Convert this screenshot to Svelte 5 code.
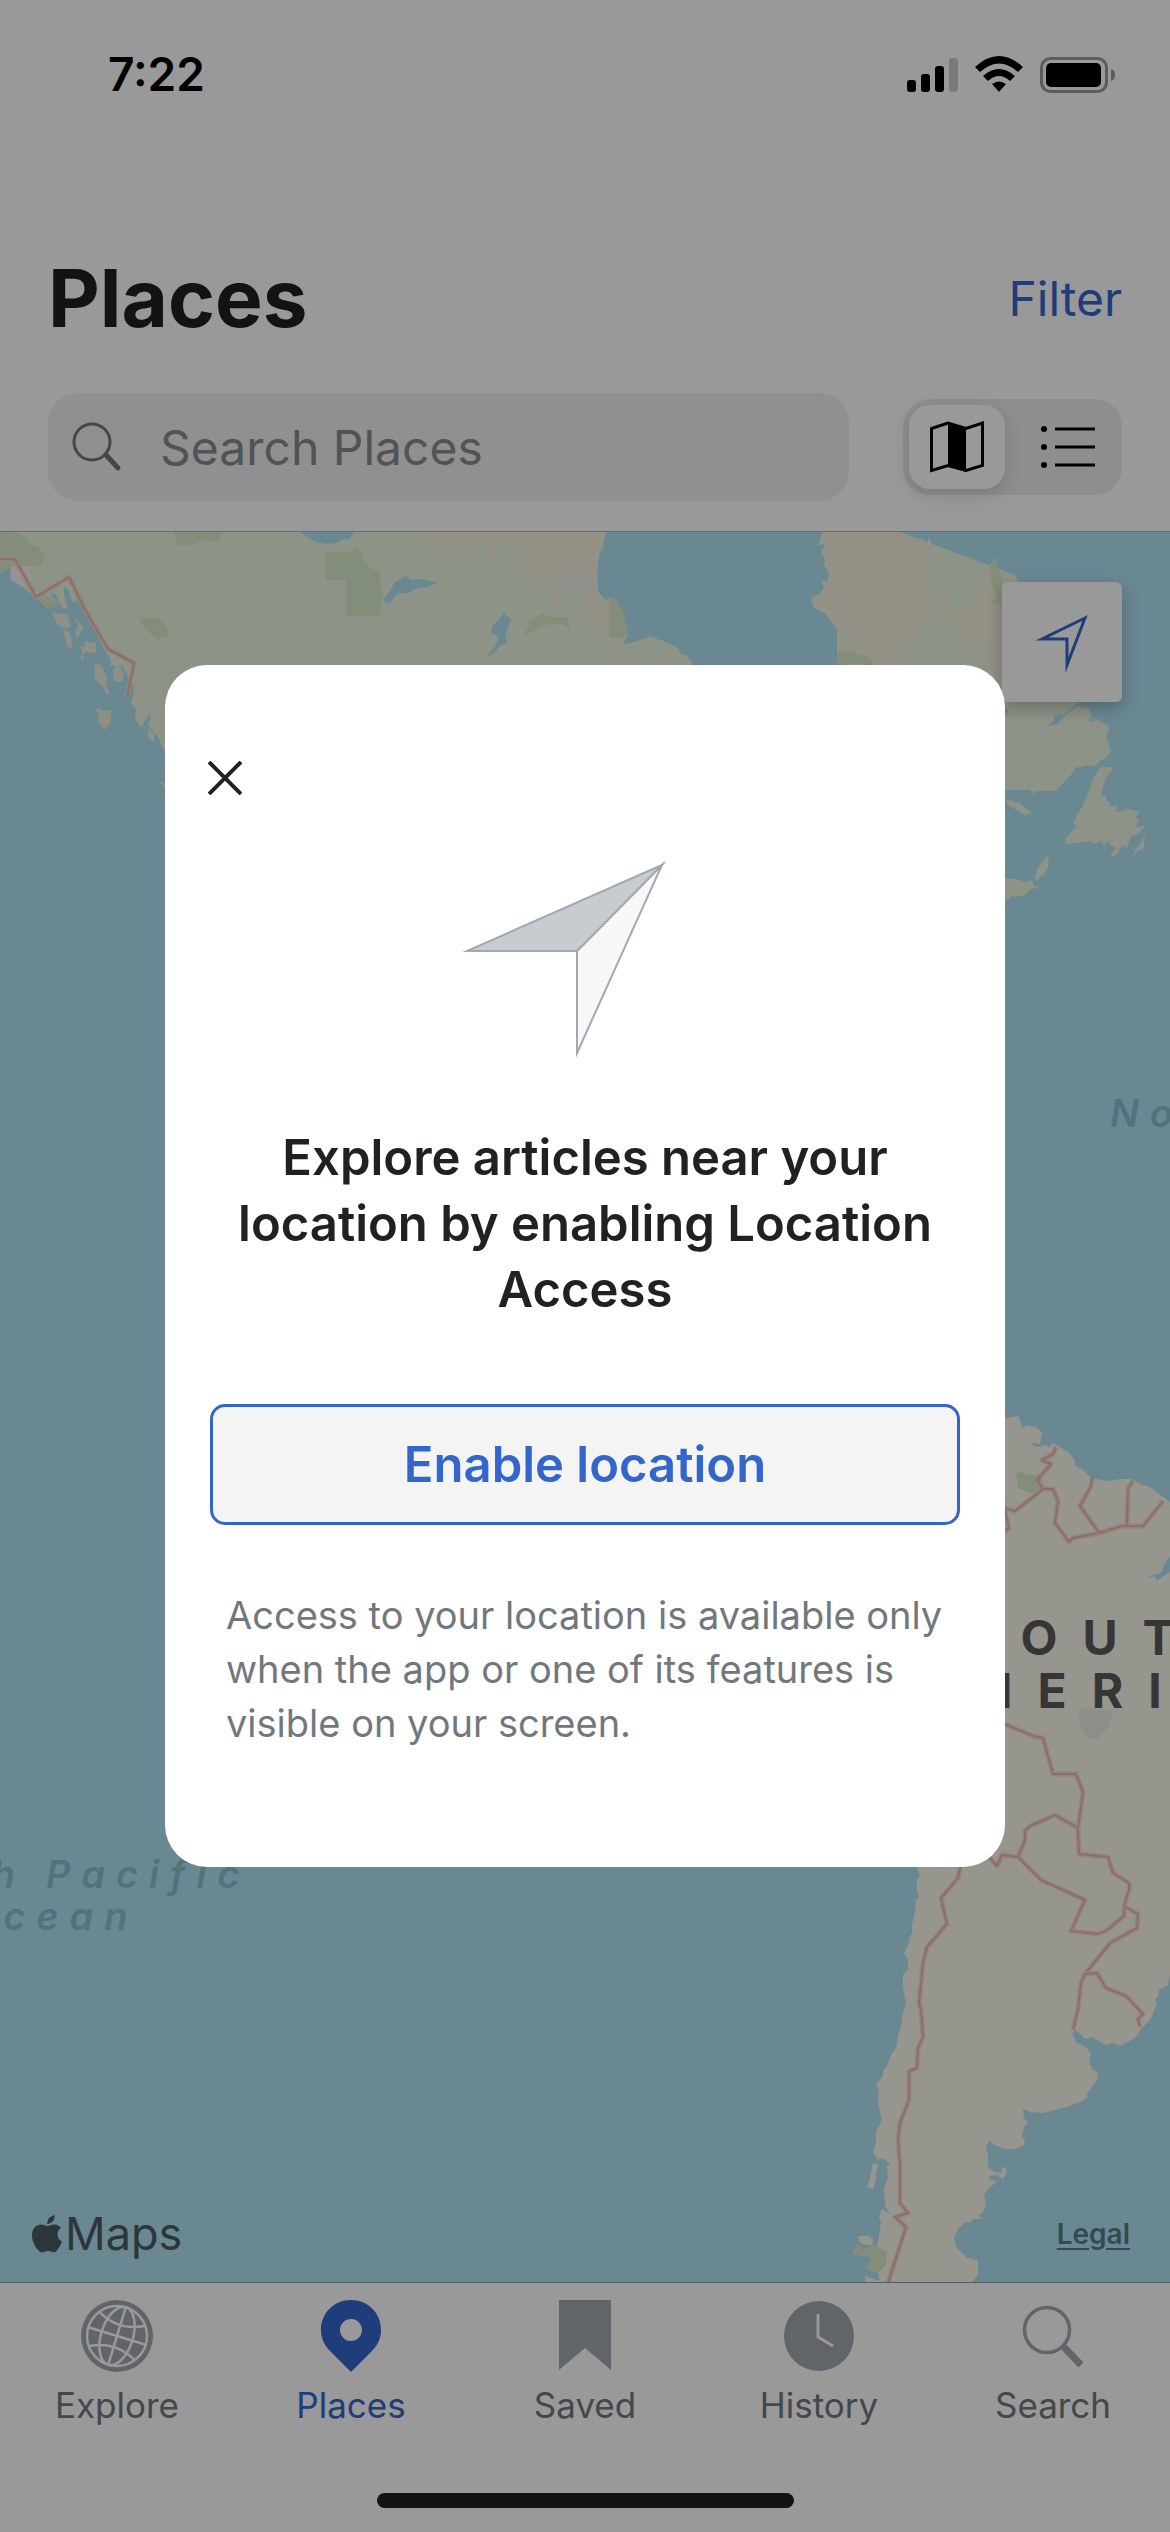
<script>
  let query = $state('');
  let view = $state('map');
  let activeTab = $state('Places');
  let dialogOpen = $state(true);

  const tabs = ['Explore', 'Places', 'Saved', 'History', 'Search'];

  const borders = [
    'M0 559L15 559L36 597L69 577L84 608L108 649L134 663L127 697',
    'M1056 1447L1053 1454L1042 1460L1051 1464L1037 1480L1043 1489L1053 1489L1058 1501L1055 1523L1069 1542L1073 1538L1099 1533L1122 1526L1143 1526L1163 1501',
    'M1043 1489L1015 1511L1000 1507',
    'M1092 1478L1091 1486L1080 1506L1099 1533',
    'M1133 1481L1128 1488L1127 1526',
    'M1000 1490L1009 1528L1003 1533',
    'M1000 1722L1033 1736L1043 1738L1053 1774L1076 1774L1083 1792L1078 1828L1079 1854L1108 1857L1113 1873L1129 1883L1129 1890L1124 1906L1124 1916L1106 1931L1097 1934L1071 1931L1085 1900L1041 1880L1018 1857L1002 1855L997 1866L990 1858',
    'M1018 1857L1025 1840L1025 1831L1030 1826L1055 1815L1078 1828',
    'M1124 1906L1138 1914L1137 1928L1110 1943L1085 1974L1081 1983L1078 2009L1073 2030',
    'M1085 1974L1097 1973L1106 1988L1126 1996L1143 2014L1138 2019L1140 2027',
    'M950 1860L961 1864L958 1878L941 1898L947 1924L927 1947L923 1963L919 2003L921 2010L923 2037L918 2048L917 2068L909 2071L909 2100L900 2123L898 2140L900 2165L900 2203L908 2213L895 2217L906 2227L887 2286'
  ];
</script>

<div class="screen">
  <header class="header">
    <div class="status">
      <span class="time">7:22</span>
      <svg class="signals" viewBox="907 53 210 40" aria-hidden="true">
        <rect x="907" y="79" width="9" height="12" rx="3" />
        <rect x="921" y="73" width="9" height="18" rx="3" />
        <rect x="935" y="65" width="9" height="26" rx="3" />
        <rect x="949" y="57" width="9" height="34" rx="3" opacity=".2" />
        <path d="M975 66Q999 44 1023 66L1018 71Q999 54 980 71Z" />
        <path d="M983 75Q999 61 1015 75L1010 80Q999 70 988 80Z" />
        <path d="M992 83Q999 78 1006 83L999 91Z" />
        <rect x="1041.500" y="57.500" width="65" height="33" rx="9" fill="none" stroke="#000" stroke-width="3" opacity=".4" />
        <rect x="1046" y="62" width="55" height="24" rx="5" />
        <path d="M1111 68Q1115 69 1115 74Q1115 79 1111 80Z" opacity=".4" />
      </svg>
    </div>

    <div class="title-row">
      <h1>Places</h1>
      <button class="filter" type="button">Filter</button>
    </div>

    <div class="search-row">
      <label class="search">
        <svg class="search-icon" viewBox="0 0 50 50" aria-hidden="true">
          <circle cx="20" cy="20" r="18" fill="none" stroke="#757575" stroke-width="3" />
          <path d="M34 33L46 46" stroke="#757575" stroke-width="5" stroke-linecap="round" />
        </svg>
        <input type="search" placeholder="Search Places" aria-label="Search Places" bind:value={query} />
      </label>
      <div class="segments" role="group" aria-label="View">
        <button type="button" class:on={view === 'map'} aria-label="Map" aria-pressed={view === 'map'} onclick={() => (view = 'map')}>
          <svg class="segment-icon" viewBox="0 0 54 54" aria-hidden="true">
            <path d="M1.500 8.500L18 3L36 8.500L52.500 3V45.500L36 50.500L18 45.500L1.500 50.500Z" fill="none" stroke="#000" stroke-width="3" />
            <path d="M18 2L36 8V52L18 46Z" />
          </svg>
        </button>
        <button type="button" class:on={view === 'list'} aria-label="List" aria-pressed={view === 'list'} onclick={() => (view = 'list')}>
          <svg class="segment-icon" viewBox="0 0 54 54" aria-hidden="true">
            <circle cx="3" cy="9" r="3" /><circle cx="3" cy="27" r="3" /><circle cx="3" cy="45" r="3" />
            <path d="M14 9H54M14 27H54M14 45H54" stroke="#000" stroke-width="3" />
          </svg>
        </button>
      </div>
    </div>
  </header>

  <main class="map">
    <svg class="terrain" viewBox="0 532 1170 1750" preserveAspectRatio="xMidYMid slice" role="img" aria-label="Map of the Americas">
      <rect x="-600" y="0" width="2400" height="3000" fill="#b1e3f4" />
      <g fill="#ebf5e1">
        <path d="M0 532L0 573L11 565L10 577L23 587L36 598L48 608L50 605L55 607L54 601L58 604L52 596L50 592L56 595L63 608L68 609L64 596L64 587L69 590L72 602L78 600L80 593L84 603L90 617L96 627L99 640L105 650L111 660L110 666L122 665L128 676L128 687L134 685L133 698L131 703L136 709L135 717L139 725L142 727L144 722L149 715L151 717L148 725L153 731L158 737L165 752L165 800L700 800L691 660L687 656L681 654L678 648L672 645L661 640L650 636L643 639L634 642L623 644L628 635L624 617L618 602L611 597L606 600L604 608L605 599L598 592L597 570L600 552L604 548L603 541L607 532Z" />
        <path d="M900 532L837 532L837 680L1005 750L1005 790L1030 790L1033 794L1036 791L1056 791L1062 784L1068 778L1071 775L1075 768L1088 765L1094 767L1101 760L1105 759L1111 751L1108 743L1106 736L1109 731L1108 726L1102 722L1095 718L1091 722L1087 717L1092 720L1090 711L1087 708L1077 706L1067 714L1063 718L1056 725L1048 726L1054 721L1054 715L1065 714L1077 703L1015 575Z" />
        <path d="M1005 799L1020 803L1031 813L1026 815L1009 806Z" />
        <path d="M1100 767L1113 767L1110 773L1106 778L1103 787L1101 797L1107 795L1106 800L1110 803L1109 807L1117 806L1116 812L1129 809L1139 812L1136 818L1139 820L1136 827L1145 826L1139 833L1131 837L1129 841L1127 848L1123 846L1114 857L1110 856L1116 848L1109 844L1111 840L1104 845L1100 841L1095 844L1090 841L1077 843L1066 844L1065 838L1077 826L1073 823L1077 815L1079 811L1082 808L1084 802L1088 792L1095 775Z" />
        <path d="M1145 835L1144 848L1137 851L1132 859L1135 850L1139 846Z" />
        <path d="M1005 878L1014 879L1026 882L1033 880L1033 885L1040 888L1031 889L1024 895L1016 897L1012 896L1005 902Z" />
        <path d="M1047 856L1049 861L1048 867L1043 877L1041 876L1037 882L1035 877L1038 868Z" />
      </g>
      <g fill="#edf1df">
        <path d="M52 613L67 614L71 627L63 628L57 623Z" />
        <path d="M73 613L78 617L83 628L78 638L75 635L78 625Z" />
        <path d="M63 630L70 632L73 648L68 648Z" />
        <path d="M80 645L83 648L86 641L96 643L96 653L86 652L83 655Z" />
        <path d="M95 663L101 665L107 678L106 684L110 694L107 694L103 687L95 680Z" />
        <path d="M96 709L99 708L102 711L112 710L110 723L105 730L98 722L99 716Z" />
        <path d="M113 670L118 664L124 673L122 682L116 682L113 678Z" />
        <path d="M148 728L154 733L154 743L148 737Z" />
        <path d="M158 781L165 783L165 787Z" />
        <path d="M80 655L84 656L82 661Z" />
      </g>
      <g fill="#f6f2de">
        <path d="M427 532L607 532L603 541L599 553L597 570L598 592L604 600L608 610L608 635L622 638L621 648L616 658L612 645L600 630L598 617L592 626L583 617L584 588L576 592L568 590L561 595L562 608L553 603L555 578L540 579L538 588L530 588L534 570L517 563L517 545L498 543L496 573L488 557L488 540L469 547L466 550L444 558L436 548Z" />
        <path d="M823 532L818 545L825 544L821 552L825 560L824 565L829 573L827 582L821 580L824 588L819 594L811 598L814 608L826 614L836 628L839 640L838 665L900 672L896 648L914 642L916 628L930 618L960 625L965 640L972 655L975 640L985 642L986 680L1005 700L1004 578L998 570L996 563L994 557L990 568L988 572L989 579L983 583L982 593L979 599L974 606L973 600L969 608L960 611L955 613L950 613L951 607L946 606L943 596L936 595L932 601L928 599L924 605L929 597L927 590L932 589L926 583L929 574L926 565L927 553L924 549L931 543L929 537L926 546L922 547L923 539L907 538L900 532Z" />
        <path d="M872 680L878 664L885 672L890 650L897 650L895 680Z" />
      </g>
      <g fill="#d9edcc">
        <path d="M0 532L15 532L25 537L29 543L40 548L45 557L41 566L23 566L12 567L0 573Z" />
        <path d="M174 532L221 532L221 538L216 542L202 540L195 544L178 546Z" />
        <path d="M325 552L351 552L356 547L362 553L365 563L372 569L380 572L382 598L380 616L346 616L346 580L325 580Z" />
        <path d="M139 619L157 617L166 626L170 638L163 636L158 640L146 630Z" />
        <path d="M524 636L530 622L542 613L551 617L568 617L570 628L561 624L543 625Z" />
        <path d="M609 600L614 597L621 608L628 632L623 638L609 638Z" />
        <path d="M838 652L852 651L860 655L868 655L874 663L872 668L855 663L837 667Z" />
        <path d="M990 565L995 558L1003 580L1003 604L991 603L997 597L991 583Z" />
        <path d="M36 598L44 594L62 602L50 608Z" />
      </g>
      <path d="M13 567L31 567L29 573L33 580L25 581L22 587L10 579Z" fill="#fbf5fb" />
      <g fill="#e9f2e6">
        <path d="M565 571L588 570L582 592L569 598L563 588Z" />
        <path d="M580 570L589 571L585 588L580 596Z" />
      </g>
      <g fill="#b1e3f4">
        <path d="M300 532L354 532L350 539L343 539L337 543L325 544L314 541L308 537Z" />
        <path d="M382 595L384 599L392 588L394 583L406 575L411 580L422 579L437 583L428 587L415 589L409 593L398 593L390 603L384 602Z" />
        <path d="M504 613L511 620L505 635L507 642L499 647L494 653L487 657L497 643L498 636L491 632L493 625L499 620Z" />
        <path d="M66 596L73 612L90 620L97 640L88 633L69 610Z" />
        <path d="M1005 708L1009 710L1006 716L1003 716Z" />
      </g>

      <path
        fill="#faf8ed"
        d="M1000 1419L1018 1416L1023 1428L1026 1425L1035 1427L1042 1432L1040 1444L1030 1443L1036 1447L1047 1445L1049 1448L1053 1443L1068 1452L1074 1459L1075 1465L1083 1470L1091 1478L1108 1481L1120 1479L1132 1479L1140 1484L1150 1487L1170 1502L1170 1556L1164 1565L1161 1573L1147 1577L1156 1577L1156 1581L1170 1572L1220 1560L1220 1960L1170 1974L1168 1985L1159 1990L1158 1997L1155 2000L1157 2003L1153 2014L1150 2020L1140 2030L1135 2038L1120 2046L1113 2043L1106 2045L1092 2037L1085 2039L1075 2029L1074 2033L1072 2032L1076 2042L1087 2048L1091 2054L1089 2062L1093 2070L1097 2071L1098 2078L1087 2094L1087 2098L1080 2102L1067 2107L1043 2113L1030 2112L1023 2109L1024 2118L1028 2123L1024 2127L1022 2137L1025 2141L1024 2145L1015 2149L1005 2149L992 2144L990 2140L986 2147L988 2155L988 2167L993 2171L1001 2173L1002 2168L1006 2167L1007 2173L1003 2179L997 2175L989 2176L989 2179L997 2182L990 2187L984 2194L986 2203L984 2211L979 2216L982 2219L973 2219L970 2223L965 2222L958 2229L954 2238L957 2248L967 2258L978 2260L978 2275L972 2282L972 2300L868 2300L865 2276L880 2281L877 2266L877 2248L881 2222L879 2217L882 2209L890 2214L885 2206L884 2188L888 2178L887 2166L890 2164L883 2158L878 2160L873 2153L876 2143L876 2132L882 2120L878 2104L879 2092L876 2084L883 2076L883 2071L888 2064L891 2055L896 2048L898 2036L902 2023L902 2017L906 2003L903 1987L903 1975L908 1969L908 1960L904 1953L908 1945L910 1936L912 1934L912 1925L915 1912L916 1900L919 1897L917 1890L917 1880L920 1876L917 1867L930 1700L960 1500Z"
      />
      <path d="M873 2163L878 2164L875 2183L873 2189L867 2187L870 2178Z" fill="#faf8ed" />
      <path d="M858 2236L869 2236L873 2240L872 2246L860 2243Z" fill="#faf8ed" />
      <path d="M1016 1474L1022 1471L1025 1475L1041 1475L1043 1487L1035 1495L1018 1488Z" fill="#d9edcc" />
      <path d="M852 2254L857 2244L864 2250L873 2244L887 2252L886 2265L878 2273L866 2269L871 2258Z" fill="#d9edcc" />
      <path d="M1078 1713L1084 1708L1113 1711L1108 1727L1097 1740L1089 1738L1082 1731Z" fill="#e9efe3" />
      <g fill="none" stroke-linejoin="round">
        {#each borders as d}
          <path {d} stroke="#fbd7cf" stroke-width="5" opacity=".9" />
          <path {d} stroke="#e8b9ae" stroke-width="2" />
        {/each}
      </g>

      <g class="ocean-label">
        <text x="1110" y="1127">North</text>
        <text x="46" y="1888">Pacific</text>
        <text x="26" y="1888" text-anchor="end">South</text>
        <text x="-37" y="1930">Ocean</text>
      </g>
      <g class="land-label">
        <text x="964" y="1655">SOUTH</text>
        <text x="907" y="1708">AMERICA</text>
      </g>
    </svg>

    <button class="locate" type="button" aria-label="My location">
      <svg class="locate-icon" viewBox="0 0 54 60" aria-hidden="true">
        <path d="M50 6L7 27H32V53Z" fill="none" stroke="#3366cc" stroke-width="3" stroke-miterlimit="20" />
      </svg>
    </button>
    <div class="credits">
      <span class="brand">
        <svg class="apple" viewBox="0 0 30 38" aria-hidden="true">
          <path d="M22.500 0Q23 4 20.500 6.500Q18 9 15 9Q15 5 17.500 2.500Q19.500 .5 22.500 0Z" />
          <path d="M15.500 11C17.500 11 19 9.500 22 9.500C25 9.500 27.500 10.500 29 13C24 16 24.500 24.500 30 26.500C28.500 31 26 34 24.500 36C22 39 19.500 36 16 36C12.500 36 10.500 39 7.500 36.500C3 32 0 26 0 20.500C0 13 4.500 9.500 9 9.500C12 9.500 13.500 11 15.500 11Z" />
        </svg>
        Maps
      </span>
      <a href="#legal">Legal</a>
    </div>
  </main>

  <nav class="tabs">
    {#each tabs as tab}
      <button type="button" class:active={activeTab === tab} onclick={() => (activeTab = tab)}>
        <svg class="tab-icon" viewBox="0 0 72 72" aria-hidden="true">
          {#if tab === 'Explore'}
            <circle cx="36" cy="36" r="36" />
            <g fill="none" stroke="#fff" stroke-width="2.500">
              <circle cx="36" cy="36" r="30" />
              <g transform="rotate(17 36 36)">
                <path d="M36 6V66M6 36H66M12 18Q36 31 60 18M12 54Q36 41 60 54" />
                <ellipse cx="36" cy="36" rx="16" ry="30" />
              </g>
            </g>
          {:else if tab === 'Places'}
            <path fill-rule="evenodd" d="M36 0C19 0 6 13 6 30C6 38 9 44 14 50L36 72L58 50C63 44 66 38 66 30C66 13 53 0 36 0ZM36 19A11 11 0 1 1 36 41A11 11 0 1 1 36 19Z" />
          {:else if tab === 'Saved'}
            <path d="M10 0H62V70L36 48L10 70Z" />
          {:else if tab === 'History'}
            <circle cx="36" cy="36" r="35" />
            <path d="M35 14V37L50 46" fill="none" stroke="#fff" stroke-width="3" />
          {:else}
            <circle cx="30" cy="30" r="22.500" fill="none" stroke="#a2a9b1" stroke-width="3.500" />
            <path d="M46 46L64 65" fill="none" stroke="#a2a9b1" stroke-width="7" />
          {/if}
        </svg>
        <span>{tab}</span>
      </button>
    {/each}
  </nav>
  <div class="home-bar"></div>
</div>

{#if dialogOpen}
  <div class="scrim">
    <div class="dialog" role="dialog" aria-modal="true" aria-labelledby="dialog-title">
      <button class="close" type="button" aria-label="Close" onclick={() => (dialogOpen = false)}>
        <svg class="close-icon" viewBox="0 0 34 34" aria-hidden="true">
          <path d="M1 1L33 33M33 1L1 33" stroke="#202122" stroke-width="4" />
        </svg>
      </button>
      <svg class="arrow" viewBox="0 0 246 200" aria-hidden="true">
        <path d="M200 5L115 91V193Z" fill="#f8f8f8" stroke="#a2a9b1" stroke-width="2" stroke-miterlimit="20" />
        <path d="M200 5L5 91H115Z" fill="#c8ccd1" stroke="#a2a9b1" stroke-width="2" stroke-miterlimit="20" />
      </svg>
      <h2 id="dialog-title">Explore articles near your location by enabling Location Access</h2>
      <button class="enable" type="button">Enable location</button>
      <p>Access to your location is available only when the app or one of its features is visible on your screen.</p>
    </div>
  </div>
{/if}

<style>
  :global(body) {
    margin: 0;
    background: #fff;
    font-family: Inter, 'Liberation Sans', sans-serif;
    color: #202122;
  }

  button {
    margin: 0;
    padding: 0;
    border: 0;
    background: none;
    font: inherit;
    color: inherit;
    cursor: pointer;
  }

  svg {
    display: block;
  }

  .screen {
    display: flex;
    flex-direction: column;
    min-height: 100vh;
  }

  .header {
    border-bottom: 1px solid #b3b3b3;
    padding: 0 48px 30px;
  }

  .status {
    display: flex;
    align-items: center;
    justify-content: space-between;
    height: 148px;
    padding: 0 5px 0 60px;
  }

  .time {
    font-size: 46px;
    font-weight: 600;
    color: #000;
  }

  .signals {
    width: 210px;
    height: 40px;
  }

  .title-row {
    display: flex;
    align-items: center;
    justify-content: space-between;
    margin-top: 102px;
    height: 96px;
  }

  h1 {
    margin: 0;
    font-size: 80px;
    line-height: 96px;
    font-weight: 700;
  }

  .filter {
    font-size: 48px;
    color: #3366cc;
  }

  .search-row {
    display: flex;
    align-items: center;
    gap: 54px;
    margin-top: 47px;
  }

  .search {
    flex: 1;
    display: flex;
    align-items: center;
    gap: 38px;
    min-width: 0;
    height: 108px;
    padding: 0 24px;
    box-sizing: border-box;
    border-radius: 30px;
    background: #f0f0f0;
  }

  .search-icon {
    flex: none;
    width: 50px;
    height: 50px;
  }

  .search input {
    flex: 1;
    min-width: 0;
    padding: 0;
    border: 0;
    outline: 0;
    background: none;
    font: inherit;
    font-size: 48px;
    color: #202122;
  }

  .search input::placeholder {
    color: #8a8a8f;
    opacity: 1;
  }

  .segments {
    display: flex;
    gap: 15px;
    padding: 6px;
    border-radius: 27px;
    background: #ededed;
  }

  .segments button {
    display: grid;
    place-items: center;
    width: 96px;
    height: 84px;
    border-radius: 21px;
  }

  .segments .on {
    background: #fff;
    box-shadow: 0 6px 18px rgba(0, 0, 0, 0.14);
  }

  .segment-icon {
    width: 54px;
    height: 54px;
  }

  .map {
    position: relative;
    flex: 1;
    display: flex;
    flex-direction: column;
    justify-content: space-between;
    padding: 50px 40px 18px 32px;
    overflow: hidden;
  }

  .terrain {
    position: absolute;
    inset: 0;
    width: 100%;
    height: 100%;
  }

  .ocean-label {
    font-size: 38px;
    font-style: italic;
    font-weight: 600;
    letter-spacing: 11px;
    fill: #8dbecf;
  }

  .land-label {
    font-size: 48px;
    font-weight: 700;
    letter-spacing: 25px;
    fill: #5a5a5a;
  }

  .locate {
    position: relative;
    align-self: flex-end;
    display: grid;
    place-items: center;
    width: 120px;
    height: 120px;
    margin-right: 8px;
    border-radius: 6px;
    background: #fff;
    box-shadow: 0 6px 18px rgba(0, 0, 0, 0.25);
  }

  .locate-icon {
    width: 54px;
    height: 60px;
  }

  .credits {
    position: relative;
    display: flex;
    align-items: center;
    justify-content: space-between;
  }

  .brand {
    display: flex;
    align-items: center;
    gap: 3px;
    font-size: 45px;
    line-height: 60px;
    color: #4a5b63;
    fill: #4a5b63;
  }

  .apple {
    width: 30px;
    height: 38px;
  }

  .credits a {
    font-size: 28px;
    font-weight: 600;
    color: #5d7b86;
    text-underline-offset: 4px;
  }

  .tabs {
    display: flex;
    height: 210px;
    border-top: 1px solid #8a9aa0;
    background: #fff;
  }

  .tabs button {
    flex: 1;
    display: flex;
    flex-direction: column;
    align-items: center;
    gap: 11px;
    padding-top: 17px;
    font-size: 35px;
    line-height: 44px;
    color: #72777d;
    fill: #a2a9b1;
  }

  .tabs .active {
    color: #3366cc;
    fill: #3366cc;
  }

  .tab-icon {
    width: 72px;
    height: 72px;
  }

  .home-bar {
    align-self: center;
    width: 417px;
    height: 15px;
    margin-bottom: 24px;
    border-radius: 8px;
    background: #202122;
  }

  .scrim {
    position: fixed;
    inset: 0;
    display: grid;
    place-items: center;
    background: rgba(0, 0, 0, 0.4);
  }

  .dialog {
    display: flex;
    flex-direction: column;
    box-sizing: border-box;
    width: calc(100% - 330px);
    max-width: 840px;
    padding: 80px 45px 117px;
    border-radius: 42px;
    background: #fff;
  }

  .close {
    display: grid;
    place-items: center;
    width: 65px;
    height: 65px;
    margin-left: -18px;
  }

  .close-icon {
    width: 34px;
    height: 34px;
  }

  .arrow {
    align-self: center;
    width: 246px;
    height: 200px;
    margin-top: 50px;
  }

  h2 {
    margin: 65px 16px 81px;
    font-size: 49px;
    line-height: 66px;
    font-weight: 600;
    text-align: center;
  }

  .enable {
    box-sizing: border-box;
    height: 121px;
    border: 3px solid #3366cc;
    border-radius: 15px;
    background: #f4f4f4;
    font-size: 49px;
    font-weight: 600;
    color: #3366cc;
  }

  p {
    margin: 63px 16px 0;
    font-size: 38px;
    line-height: 54px;
    color: #72777d;
  }
</style>
